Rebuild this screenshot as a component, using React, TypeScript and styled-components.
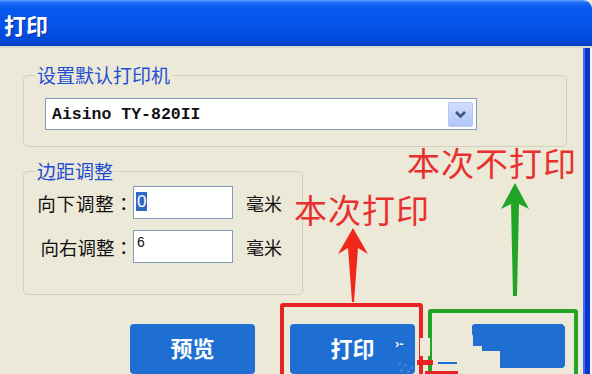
import React from "react";
import styled, { createGlobalStyle } from "styled-components";

const Global = createGlobalStyle`
  html, body { margin: 0; padding: 0; background: #ffffff; }
  body { font-family: "Noto Sans CJK SC", "Noto Sans", sans-serif; }
  * { box-sizing: border-box; }
`;

const Window = styled.div`
  position: relative;
  width: 592px;
  height: 374px;
  overflow: hidden;
  display: flex;
  flex-direction: column;
  background: #ece9d8;
`;

const TitleBar = styled.div`
  height: 48px;
  flex: none;
  display: flex;
  align-items: center;
  padding: 2px 0 0 4px;
  border-top-right-radius: 9px;
  border-bottom: 2px solid #dcdad0;
  background: linear-gradient(
    180deg,
    #5aa2ff 0%,
    #1a6cf6 6%,
    #0758ee 18%,
    #0453ea 55%,
    #034bdc 85%,
    #0a40c6 100%
  );
`;

const TitleText = styled.span`
  color: #ffffff;
  font-size: 22px;
  font-weight: 700;
  line-height: 1;
  text-shadow: 1px 1px 0 #0a2a9a;
`;

const Body = styled.div`
  flex: 1;
  display: flex;
`;

const Content = styled.div`
  flex: 1;
  display: flex;
  flex-direction: column;
  align-items: flex-start;
  padding: 15px 16px 0 23px;
`;

const Frame = styled.div`
  width: 9px;
  flex: none;
  background: linear-gradient(90deg, #3a6ef0 0 2px, #0a36cf 2px 7px, #f4f4f4 7px);
`;

const Group = styled.fieldset<{ $w: number; $pad: string }>`
  margin: 0;
  width: ${(p) => p.$w}px;
  padding: ${(p) => p.$pad};
  border: 1px solid #d3d0bf;
  border-radius: 5px;
  min-width: 0;
`;

const Legend = styled.legend`
  padding: 0 2px;
  font-size: 19px;
  line-height: 24px;
  color: #1f4fd2;
`;

const Gap = styled.div<{ $h: number }>`
  height: ${(p) => p.$h}px;
  flex: none;
`;

const Select = styled.div`
  margin-left: 10px;
  width: 432px;
  height: 32px;
  display: flex;
  align-items: center;
  justify-content: space-between;
  background: #ffffff;
  border: 1px solid #7f9db9;
  padding: 0 3px 0 6px;
`;

const SelectText = styled.span`
  font-family: "Liberation Mono", "Courier New", monospace;
  font-weight: 700;
  font-size: 16.5px;
  color: #111;
`;

const DropButton = styled.div`
  width: 25px;
  height: 25px;
  border-radius: 2px;
  border: 1px solid #b7c9f2;
  background: linear-gradient(180deg, #d2defc 0%, #bccff9 60%, #b2c6f6 100%);
  display: flex;
  align-items: center;
  justify-content: center;
`;

const Rows = styled.div`
  display: grid;
  grid-template-columns: 98px 100px auto;
  grid-auto-rows: 33px;
  row-gap: 11px;
  align-items: center;
`;

const RowLabel = styled.span<{ $ls: number }>`
  justify-self: end;
  font-size: 18.5px;
  letter-spacing: ${(p) => p.$ls}px;
  color: #111;
  white-space: nowrap;
  display: flex;
  align-items: center;
`;

const Colon = styled.span`
  font-family: "Noto Sans CJK TC", "Noto Sans CJK SC", sans-serif;
  letter-spacing: 0;
`;

const Field = styled.div<{ $pt: number }>`
  height: 33px;
  width: 100px;
  background: #ffffff;
  border: 1px solid #7f9db9;
  padding: ${(p) => p.$pt}px 0 0 2px;
  font-family: "Liberation Sans", Arial, sans-serif;
  line-height: 1;
`;

const Selected = styled.span`
  display: inline-block;
  background: #316ac5;
  color: #ffffff;
  font-size: 17px;
  line-height: 19px;
  padding: 0 1px;
`;

const PlainValue = styled.span`
  display: inline-block;
  font-size: 14px;
  color: #111;
  padding-left: 1px;
`;

const Unit = styled.span`
  padding-left: 13px;
  font-size: 18px;
  color: #111;
`;

const ButtonRow = styled.div`
  display: flex;
  gap: 35px;
  padding-left: 107px;
`;

const Button = styled.div`
  width: 125px;
  height: 50px;
  border-radius: 4px;
  background: #1f6fd2;
  color: #ffffff;
  font-size: 22px;
  font-weight: 700;
  display: flex;
  align-items: center;
  justify-content: center;
  padding-bottom: 4px;
`;

const Blob = styled.div`
  margin-left: 22px;
  width: 93px;
  height: 44px;
  background: #1f6fd2;
  border-radius: 3px;
  clip-path: polygon(
    0 0,
    97% 0,
    100% 6%,
    100% 95%,
    98% 100%,
    28px 100%,
    28px 27px,
    10px 27px,
    10px 22px,
    1px 22px,
    1px 12px,
    0 10px
  );
`;

const Overlay = styled.div`
  position: absolute;
  inset: 0;
  pointer-events: none;
`;

const Note = styled.span<{ $x: number; $y: number }>`
  position: absolute;
  left: ${(p) => p.$x}px;
  top: ${(p) => p.$y}px;
  font-size: 33px;
  line-height: 1;
  color: #e8302e;
  white-space: nowrap;
  letter-spacing: 1px;
`;

const Frame2 = styled.div<{ $x: number; $y: number; $w: number; $c: string; $b: number }>`
  position: absolute;
  left: ${(p) => p.$x}px;
  top: ${(p) => p.$y}px;
  width: ${(p) => p.$w}px;
  height: 120px;
  border: ${(p) => p.$b}px solid ${(p) => p.$c};
  border-radius: 3px;
`;

const Glitch = styled.span`
  position: absolute;
  left: 395px;
  top: 336px;
  font-family: "Liberation Sans", Arial, sans-serif;
  font-size: 13px;
  font-weight: 700;
  color: #f4f4f4;
`;

const ArrowLayer = styled.svg`
  position: absolute;
  left: 0;
  top: 0;
`;

export default function App() {
  return (
    <>
      <Global />
      <Window>
        <TitleBar>
          <TitleText>打印</TitleText>
        </TitleBar>
        <Body>
          <Content>
            <Group $w={544} $pad="11px 15px 16px 11px">
              <Legend>设置默认打印机</Legend>
              <Select>
                <SelectText>Aisino TY-820II</SelectText>
                <DropButton>
                  <svg width="13" height="9" viewBox="0 0 13 9">
                    <path d="M2 2 L6.5 6.5 L11 2" fill="none" stroke="#3f5478" strokeWidth="2.6" />
                  </svg>
                </DropButton>
              </Select>
            </Group>
            <Gap $h={12} />
            <Group $w={280} $pad="3px 0 31px 11px">
              <Legend>边距调整</Legend>
              <Rows>
                <RowLabel $ls={0.8}>
                  向下调整<Colon>：</Colon>
                </RowLabel>
                <Field $pt={5}>
                  <Selected>0</Selected>
                </Field>
                <Unit>毫米</Unit>
                <RowLabel $ls={0}>
                  向右调整<Colon>：</Colon>
                </RowLabel>
                <Field $pt={3}>
                  <PlainValue>6</PlainValue>
                </Field>
                <Unit>毫米</Unit>
              </Rows>
            </Group>
            <Gap $h={29} />
            <ButtonRow>
              <Button>预览</Button>
              <Button>打印</Button>
              <Blob />
            </ButtonRow>
          </Content>
          <Frame />
        </Body>
        <Overlay>
          <Note $x={407} $y={146}>本次不打印</Note>
          <Note $x={294} $y={193}>本次打印</Note>
          <Frame2 $x={280} $y={303} $w={143} $c="#e92424" $b={4} />
          <Frame2 $x={428} $y={309} $w={150} $c="#22a526" $b={4} />
          <Glitch>›-</Glitch>
          <ArrowLayer width="592" height="374" viewBox="0 0 592 374">
            <polygon
              points="515,183 529,209 519,204 517,296 513,296 511,204 501,209"
              fill="#22a526"
            />
            <polygon
              points="353,228 368,254 358,248 354,302 352,302 348,248 338,254"
              fill="#f0281c"
            />
            <rect x="420" y="338" width="10" height="18" fill="#ece9d8" />
            <rect x="417" y="360" width="16" height="5" fill="#e92424" />
            <rect x="438" y="362" width="19" height="2" fill="#1f6fd2" />
            <rect x="425" y="371" width="33" height="3" fill="#e92424" />
            <rect x="398" y="362" width="3" height="3" fill="#3b7fd6" />
            <rect x="404" y="364" width="3" height="3" fill="#3b7fd6" />
            <rect x="410" y="366" width="3" height="3" fill="#3b7fd6" />
            <rect x="400" y="369" width="3" height="3" fill="#3b7fd6" />
            <rect x="407" y="370" width="3" height="3" fill="#3b7fd6" />
          </ArrowLayer>
        </Overlay>
      </Window>
    </>
  );
}
